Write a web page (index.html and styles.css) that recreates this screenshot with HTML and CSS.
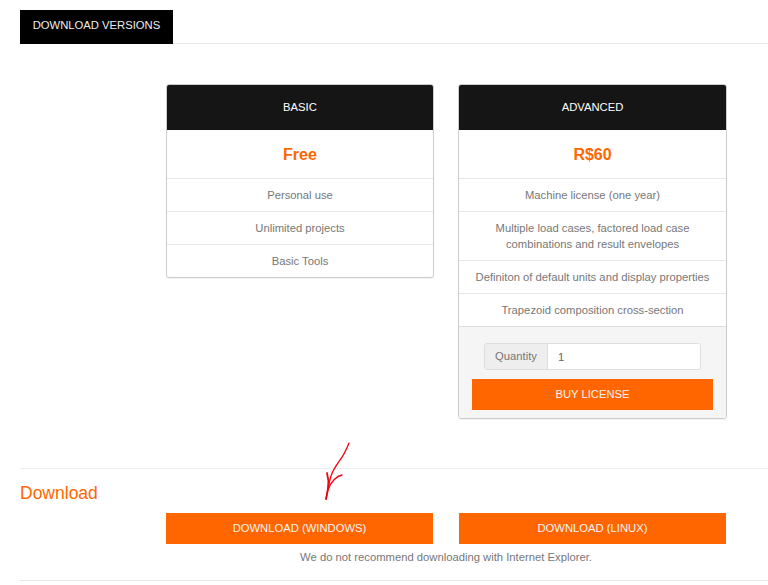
FILE: index.html
```html
<!DOCTYPE html>
<html lang="en">
<head>
<meta charset="utf-8">
<title>Download versions</title>
<link rel="stylesheet" href="styles.css">
</head>
<body>
<div class="tabs"><a class="tab">DOWNLOAD VERSIONS</a></div>
<div class="plans">
  <section class="plan">
    <h3 class="plan-head">BASIC</h3>
    <div class="price">Free</div>
    <ul class="features">
      <li>Personal use</li>
      <li>Unlimited projects</li>
      <li>Basic Tools</li>
    </ul>
  </section>
  <section class="plan">
    <h3 class="plan-head">ADVANCED</h3>
    <div class="price">R$60</div>
    <ul class="features">
      <li>Machine license (one year)</li>
      <li>Multiple load cases, factored load case combinations and result envelopes</li>
      <li>Definiton of default units and display properties</li>
      <li>Trapezoid composition cross-section</li>
    </ul>
    <div class="plan-foot">
      <div class="qty"><span class="qty-label">Quantity</span><input class="qty-input" type="text" value="1"></div>
      <a class="btn">BUY LICENSE</a>
    </div>
  </section>
</div>
<section class="download">
  <h2 class="download-title">Download</h2>
  <div class="download-buttons">
    <a class="btn">DOWNLOAD (WINDOWS)</a>
    <a class="btn">DOWNLOAD (LINUX)</a>
  </div>
  <p class="note">We do not recommend downloading with Internet Explorer.</p>
</section>
<svg class="arrow" width="30" height="62" viewBox="0 0 30 62" fill="none" stroke="#f5000f" stroke-linecap="round" stroke-linejoin="round">
  <path d="M26 3 C23 10 21 15 17 20 C13 26 10 30 8 36 C6 42 5 50 3 59" stroke-width="1.3"/>
  <path d="M4 33 C5.500 38 6 42 5 48 C4.500 52 4 55 3 59" stroke-width="1.8"/>
  <path d="M19 35 C14 36 8 41 5 50" stroke-width="1.4"/>
</svg>
</body>
</html>
```

FILE: styles.css
```css
* { box-sizing: border-box; }
html, body { margin: 0; padding: 0; }
body {
  position: relative;
  height: 585px;
  overflow: hidden;
  background: #fff;
  color: #777;
  font-family: "Liberation Sans", Arial, sans-serif;
  font-size: 11.25px;
  line-height: 16px;
  padding: 10px 0 0 20px;
}
.tabs { border-bottom: 1px solid #e6e6e6; height: 34px; }
.tab {
  display: block;
  width: 153px;
  height: 34px;
  background: #000;
  color: #eee;
  line-height: 31px;
  text-align: center;
}
.plans {
  display: flex;
  align-items: flex-start;
  gap: 24px;
  margin: 40px 0 0 146px;
}
.plan {
  width: 268px;
  border: 1px solid #ccc;
  border-radius: 3px;
  overflow: hidden;
  box-shadow: 0 1px 1px rgba(0, 0, 0, 0.05);
}
.plan + .plan { width: 269px; }
.plan-head {
  margin: 0;
  height: 45px;
  background: #151515;
  color: #fff;
  font-size: 11.25px;
  font-weight: 400;
  line-height: 44px;
  text-align: center;
}
.price {
  height: 48px;
  color: #f60;
  font-size: 16px;
  font-weight: 700;
  line-height: 49px;
  text-align: center;
}
.features { margin: 0; padding: 0; list-style: none; }
.features li {
  border-top: 1px solid #e6e6e6;
  padding: 8px 15px;
  text-align: center;
}
.features li:nth-child(2):nth-last-child(3) { padding-left: 30px; padding-right: 30px; }
.plan-foot {
  border-top: 1px solid #ddd;
  background: #f5f5f5;
  padding: 16px 13px 8px;
}
.qty {
  display: flex;
  width: 217px;
  height: 27px;
  margin: 0 0 9px 12px;
  border: 1px solid #ddd;
  border-radius: 3px;
  overflow: hidden;
}
.qty-label {
  width: 63px;
  border-right: 1px solid #ddd;
  background: #eee;
  line-height: 25px;
  text-align: center;
}
.qty-input {
  flex: 1;
  min-width: 0;
  border: 0;
  padding: 0 10px;
  outline: 0;
  background: #fff;
  color: #666;
  font: 11.25px "Liberation Sans", Arial, sans-serif;
}
.btn {
  display: block;
  height: 31px;
  background: #f60;
  color: #f4f4f4;
  line-height: 30px;
  text-align: center;
}
.download {
  margin: 49px 0 0 0;
  border-top: 1px solid #eee;
  border-bottom: 1px solid #e6e6e6;
  height: 113px;
  padding-top: 14px;
}
.download-title {
  margin: 0;
  height: 30px;
  color: #f60;
  font-size: 17.5px;
  font-weight: 400;
  line-height: 20px;
}
.download-buttons {
  display: flex;
  gap: 26px;
  margin-left: 146px;
}
.download-buttons .btn { width: 267px; }
.note { margin: 5px 0 0 146px; width: 560px; text-align: center; }
.arrow { position: absolute; left: 323px; top: 440px; }
```
